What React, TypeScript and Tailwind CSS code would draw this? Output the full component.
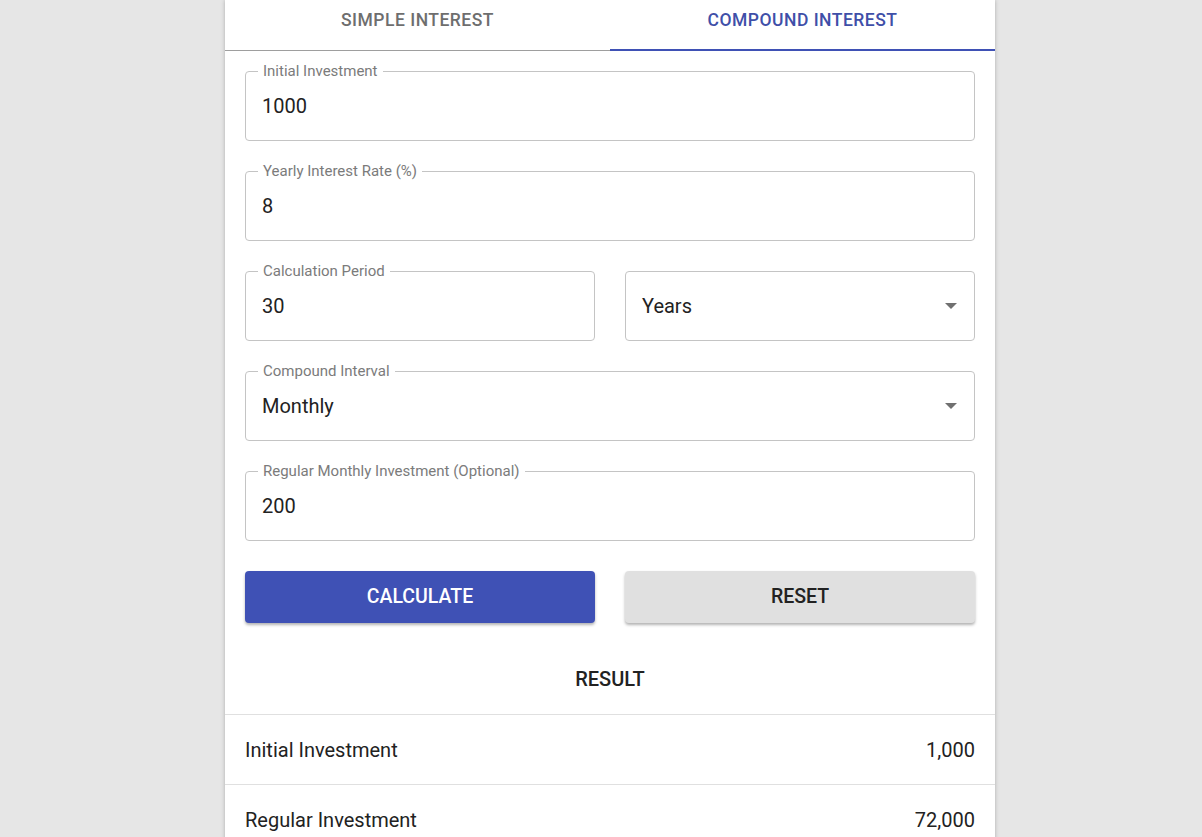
import React from "react";

type FieldProps = {
  label?: string;
  value: string;
  select?: boolean;
};

function Field({ label, value, select }: FieldProps) {
  return (
    <div className="relative h-[70px] w-full rounded-[4px] border border-[#c4c4c4] bg-white">
      {label && (
        <span className="absolute left-[12px] top-[-11px] bg-white px-[5px] text-[15px] leading-[20px] text-[#7b7b7b]">
          {label}
        </span>
      )}
      <div className="flex h-full items-center justify-between pl-[16px] pr-[16px] text-[20px] text-[#222222]">
        <span>{value}</span>
        {select && (
          <svg width="12" height="6" viewBox="0 0 12 6" className="mr-[1px]">
            <path d="M0 0 L12 0 L6 6 Z" fill="#707070" />
          </svg>
        )}
      </div>
    </div>
  );
}

function ResultRow({ label, value }: { label: string; value: string }) {
  return (
    <div className="flex h-[70px] items-center justify-between border-b border-[#e0e0e0] px-[20px] text-[20px] text-[#222222]">
      <span>{label}</span>
      <span>{value}</span>
    </div>
  );
}

export default function App() {
  return (
    <div
      className="flex h-[837px] w-full justify-center overflow-hidden bg-[#e6e6e6] pl-[18px]"
      style={{ fontFamily: "Roboto, 'Noto Sans', sans-serif" }}
    >
      <div className="h-fit w-[770px] bg-white shadow-[0_0_4px_rgba(0,0,0,0.25)]">
        <div className="flex h-[51px] border-b border-[#9e9e9e]">
          <div className="flex flex-1 items-center justify-center pb-[9px] text-[17.5px] font-medium tracking-[0.5px] text-[#6e6e6e]">
            SIMPLE INTEREST
          </div>
          <div className="relative flex flex-1 items-center justify-center pb-[9px] text-[17.5px] font-medium tracking-[0.5px] text-[#3f4fa8]">
            COMPOUND INTEREST
            <div className="absolute bottom-[-1px] left-0 right-0 h-[2px] bg-[#3f51b5]" />
          </div>
        </div>

        <div className="flex flex-col gap-[30px] px-[20px] pt-[20px]">
          <Field label="Initial Investment" value="1000" />
          <Field label="Yearly Interest Rate (%)" value="8" />
          <div className="flex gap-[30px]">
            <Field label="Calculation Period" value="30" />
            <Field value="Years" select />
          </div>
          <Field label="Compound Interval" value="Monthly" select />
          <Field label="Regular Monthly Investment (Optional)" value="200" />
          <div className="flex gap-[30px]">
            <button className="h-[52px] w-full rounded-[4px] bg-[#3f51b5] text-[19.5px] font-medium text-white shadow-[0_2px_3px_rgba(0,0,0,0.3)]">
              CALCULATE
            </button>
            <button className="h-[52px] w-full rounded-[4px] bg-[#e0e0e0] text-[19.5px] font-medium text-[#222222] shadow-[0_2px_3px_rgba(0,0,0,0.3)]">
              RESET
            </button>
          </div>
        </div>

        <div className="flex h-[91px] items-center justify-center pt-[20px] text-[20px] font-medium text-[#222222]">
          RESULT
        </div>
        <div className="border-t border-[#e0e0e0]">
          <ResultRow label="Initial Investment" value="1,000" />
          <ResultRow label="Regular Investment" value="72,000" />
        </div>
      </div>
    </div>
  );
}
